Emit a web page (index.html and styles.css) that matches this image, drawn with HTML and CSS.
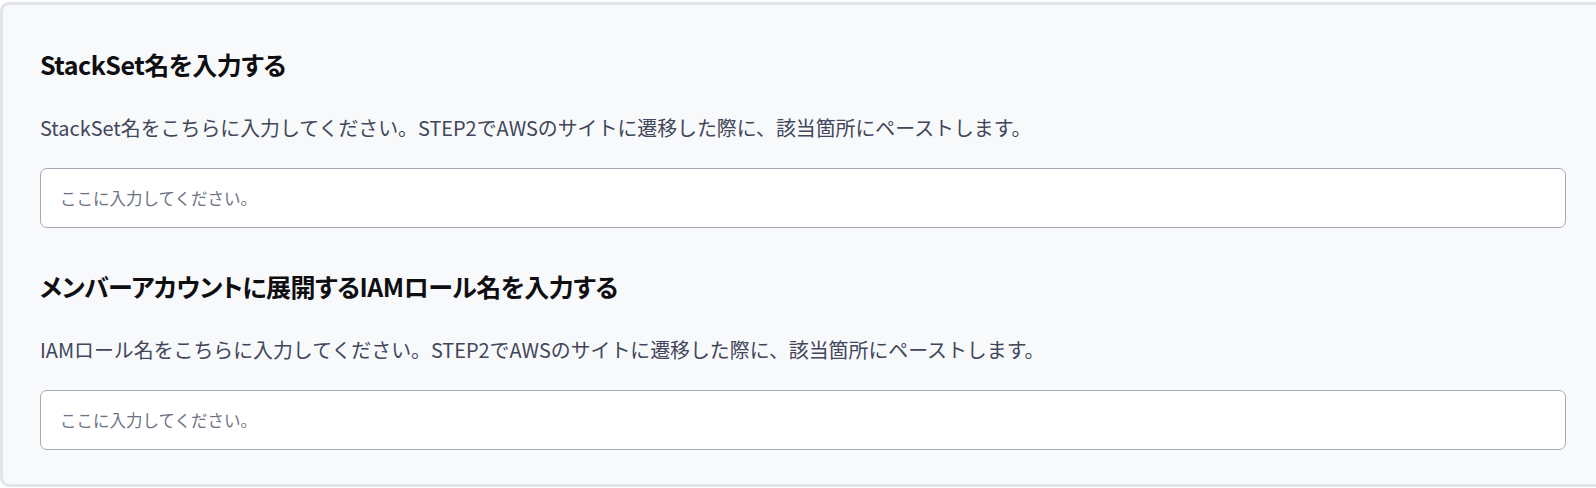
FILE: index.html
```html
<!DOCTYPE html>
<html lang="ja">
<head>
<meta charset="utf-8">
<title>StackSet</title>
<link rel="stylesheet" href="styles.css">
</head>
<body>
<div class="card">
  <section class="field">
    <h2 class="field-title">StackSet名を入力する</h2>
    <p class="field-desc">StackSet名をこちらに入力してください。STEP2でAWSのサイトに遷移した際に、該当箇所にペーストします。</p>
    <input class="field-input" type="text" placeholder="ここに入力してください。">
  </section>
  <section class="field">
    <h2 class="field-title">メンバーアカウントに展開するIAMロール名を入力する</h2>
    <p class="field-desc">IAMロール名をこちらに入力してください。STEP2でAWSのサイトに遷移した際に、該当箇所にペーストします。</p>
    <input class="field-input" type="text" placeholder="ここに入力してください。">
  </section>
</div>
</body>
</html>
```

FILE: styles.css
```css
html, body {
  margin: 0;
  padding: 0;
  background: #ffffff;
  overflow: hidden;
}

body {
  font-family: "Noto Sans CJK JP", "Noto Sans", sans-serif;
}

.card {
  box-sizing: border-box;
  width: 1606px;
  margin: 2px 0 0 0;
  border: 3px solid #e2e4ec;
  border-radius: 9px;
  background: #f8f9fb;
  padding: 44px 37px 34px 37px;
  display: flex;
  flex-direction: column;
  gap: 43px;
}

.field {
  display: flex;
  flex-direction: column;
}

.field-title {
  margin: 0;
  font-size: 25px;
  line-height: 30px;
  font-weight: 700;
  color: #0f0f12;
  letter-spacing: -0.5px;
  font-feature-settings: "palt";
}

.field-desc {
  margin: 35px 0 0 0;
  font-size: 19.9px;
  line-height: 28px;
  color: #41465a;
}

.field-input {
  box-sizing: border-box;
  margin: 26px 0 0 0;
  height: 60px;
  width: 1526px;
  padding: 0 19px;
  border: 1px solid #a7a9b6;
  border-radius: 7px;
  background: #ffffff;
  font-family: "Noto Sans CJK JP", "Noto Sans", sans-serif;
  font-size: 16.5px;
  color: #222;
  outline: none;
}

.field-input::placeholder {
  color: #6e7383;
}
```
